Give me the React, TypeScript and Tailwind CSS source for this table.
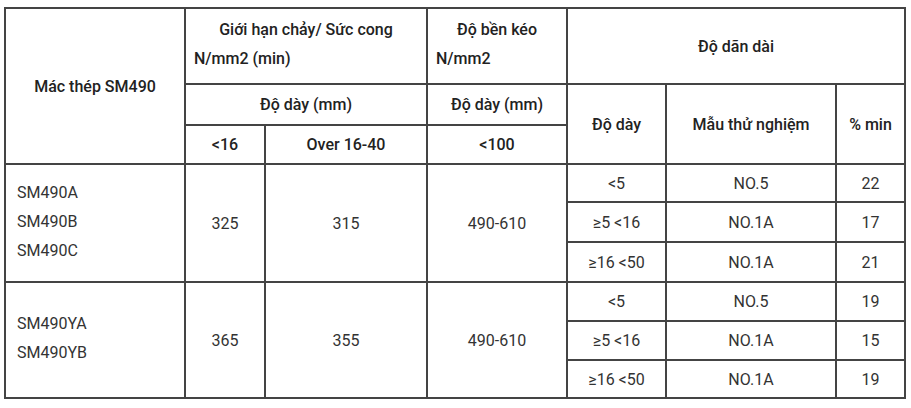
import React from "react";

const cell = "border-2 border-[#444] text-center align-middle";
const head = `${cell} font-medium text-[#222]`;
const data = `${cell} text-[#333]`;

interface Group {
  grades: string[];
  yieldLow: string;
  yieldHigh: string;
  tensile: string;
  rows: { thick: string; sample: string; min: string; h: string }[];
}

const groups: Group[] = [
  {
    grades: ["SM490A", "SM490B", "SM490C"],
    yieldLow: "325",
    yieldHigh: "315",
    tensile: "490-610",
    rows: [
      { thick: "<5", sample: "NO.5", min: "22", h: "h-[38px]" },
      { thick: "≥5 <16", sample: "NO.1A", min: "17", h: "h-[40px]" },
      { thick: "≥16 <50", sample: "NO.1A", min: "21", h: "h-[40px]" },
    ],
  },
  {
    grades: ["SM490YA", "SM490YB"],
    yieldLow: "365",
    yieldHigh: "355",
    tensile: "490-610",
    rows: [
      { thick: "<5", sample: "NO.5", min: "19", h: "h-[39px]" },
      { thick: "≥5 <16", sample: "NO.1A", min: "15", h: "h-[39px]" },
      { thick: "≥16 <50", sample: "NO.1A", min: "19", h: "h-[38px]" },
    ],
  },
];

export default function App() {
  return (
    <div className="w-[911px] h-[408px] bg-white pt-[7px] pl-[4px] font-['Roboto','Liberation_Sans',sans-serif] text-[16px] leading-[29px]">
      <table className="table-fixed border-collapse w-[900px]">
        <colgroup>
          <col className="w-[180px]" />
          <col className="w-[80px]" />
          <col className="w-[162px]" />
          <col className="w-[140px]" />
          <col className="w-[99px]" />
          <col className="w-[170px]" />
          <col className="w-[69px]" />
        </colgroup>
        <thead>
          <tr className="h-[76px]">
            <th rowSpan={3} className={head}>
              Mác thép SM490
            </th>
            <th colSpan={2} className={`${head} px-2 pb-1`}>
              <p>Giới hạn chảy/ Sức cong</p>
              <p className="text-left">N/mm2 (min)</p>
            </th>
            <th className={`${head} px-2 pb-1`}>
              <p>Độ bền kéo</p>
              <p className="text-left">N/mm2</p>
            </th>
            <th colSpan={3} className={head}>
              Độ dãn dài
            </th>
          </tr>
          <tr className="h-[41px]">
            <th colSpan={2} className={head}>
              Độ dày (mm)
            </th>
            <th className={head}>Độ dày (mm)</th>
            <th rowSpan={2} className={head}>
              Độ dày
            </th>
            <th rowSpan={2} className={head}>
              Mẫu thử nghiệm
            </th>
            <th rowSpan={2} className={head}>
              % min
            </th>
          </tr>
          <tr className="h-[39px]">
            <th className={head}>&lt;16</th>
            <th className={head}>Over 16-40</th>
            <th className={head}>&lt;100</th>
          </tr>
        </thead>
        <tbody>
          {groups.map((g) =>
            g.rows.map((r, i) => (
              <tr key={g.grades[0] + i} className={r.h}>
                {i === 0 && (
                  <>
                    <td rowSpan={3} className={`${data} text-left pl-[11px] pb-1`}>
                      {g.grades.map((s) => (
                        <div key={s}>{s}</div>
                      ))}
                    </td>
                    <td rowSpan={3} className={data}>
                      {g.yieldLow}
                    </td>
                    <td rowSpan={3} className={data}>
                      {g.yieldHigh}
                    </td>
                    <td rowSpan={3} className={data}>
                      {g.tensile}
                    </td>
                  </>
                )}
                <td className={data}>{r.thick}</td>
                <td className={data}>{r.sample}</td>
                <td className={data}>{r.min}</td>
              </tr>
            ))
          )}
        </tbody>
      </table>
    </div>
  );
}
